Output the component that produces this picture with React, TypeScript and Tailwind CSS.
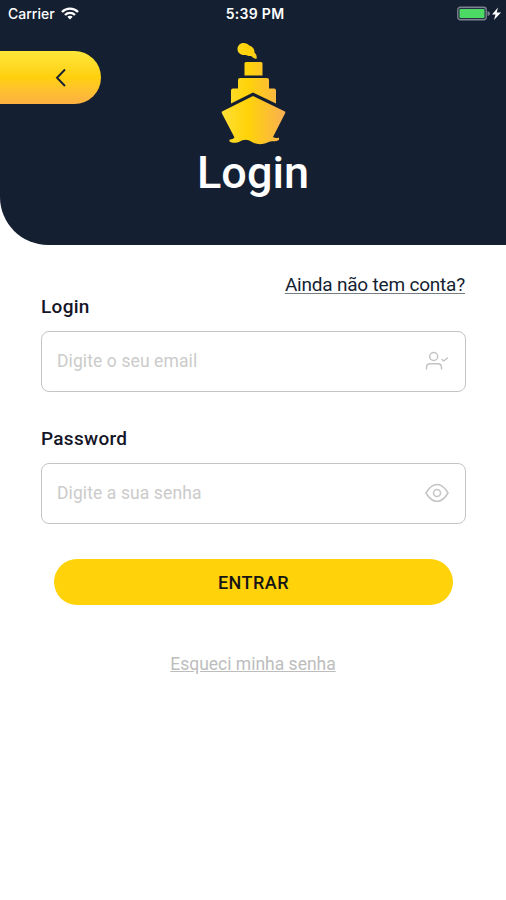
import React, { useState } from 'react';

const ShipLogo: React.FC = () => (
  <svg width="66" height="104" viewBox="0 0 66 104" fill="url(#ship)" aria-hidden="true">
    <defs>
      <linearGradient id="ship" gradientUnits="userSpaceOnUse" x1="0" y1="0" x2="66" y2="0">
        <stop offset="0" stopColor="#ffe03a" />
        <stop offset="0.42" stopColor="#ffd308" />
        <stop offset="1" stopColor="#f9ae55" />
      </linearGradient>
    </defs>
    <path d="M23.500 1C20 1 17.500 3.700 17.500 7C17.500 10.800 20.500 13.200 24.500 13C26 13 27 13.300 28 13.800C29.500 14.600 31 14.200 32 14.500C33 16 34.500 16.800 36.500 16.800C37.300 14 36 12 34.500 10.800C34.800 7 32.500 4.500 29.500 3.800C28 2 26 1 23.500 1Z" />
    <path d="M26 20H41Q42.500 20 42.500 21.500V33.500H24.500V21.500Q24.500 20 26 20Z" />
    <path d="M20 36H47Q49 36 49 38V46.500H54Q56 46.500 56 48.500V61.500L33 50.500L11 61.500V48.500Q11 46.500 13 46.500H18V38Q18 36 20 36Z" />
    <path d="M33 54L65 69.500Q65.500 70.500 65 71.500L53 95Q56 96.800 59 95.500V98C56 100 51 98.500 47.500 100.500C42 103 36 102.500 32 100C27 96.500 23 97.500 20 99.500C16 101.500 12 101 9.500 99.500V97.500Q12.500 98 14.500 95.500L2 71.500Q1.500 70.500 2 69.500Z" />
  </svg>
);

const WifiIcon: React.FC = () => (
  <svg width="18" height="13" viewBox="0 0 18 13" aria-hidden="true">
    <g fill="none" stroke="#fff" strokeWidth="2.4">
      <path d="M1 5C5.500 0.500 12.500 0.500 17 5" />
      <path d="M4 8C6.800 5.200 11.200 5.200 14 8" />
    </g>
    <path d="M9 12.500L6.300 9.700Q9 7.700 11.700 9.700Z" fill="#fff" />
  </svg>
);

const BatteryIcon: React.FC = () => (
  <svg width="45" height="16" viewBox="0 0 45 16" aria-hidden="true">
    <rect x="0.750" y="1.250" width="28.500" height="12.500" rx="2.500" fill="#253044" stroke="#7b828d" strokeWidth="1.300" />
    <rect x="2.500" y="3" width="25" height="9" rx="1" fill="#4cd964" />
    <path d="M30.500 5Q33 5.500 33 7.500Q33 9.500 30.500 10Z" fill="#7b828d" />
    <path d="M41 1.500L35 8.500H38.500L37 14L44 6.500H39.700Z" fill="#fff" />
  </svg>
);

const BackIcon: React.FC = () => (
  <svg width="12" height="20" viewBox="0 0 12 20" fill="none" stroke="#151f32" strokeWidth="1.900" aria-hidden="true">
    <path d="M10 1.500L2 9.750L10 18" />
  </svg>
);

const UserCheckIcon: React.FC = () => (
  <svg width="24" height="20" viewBox="0 0 24 20" fill="none" stroke="#c4c4c4" strokeWidth="1.500" strokeLinecap="round" strokeLinejoin="round" aria-hidden="true">
    <circle cx="8.700" cy="5.500" r="4" />
    <path d="M1.500 18V16.500Q1.500 12.800 5.200 12.800H12.800Q16.500 12.800 16.500 16.500V18" />
    <path d="M17 8.500L18.700 10L22.500 7" />
  </svg>
);

const EyeIcon: React.FC = () => (
  <svg width="24" height="20" viewBox="0 0 24 20" fill="none" stroke="#c4c4c4" strokeWidth="1.500" aria-hidden="true">
    <path d="M1 10C4.500 4 8 1.500 12 1.500S19.500 4 23 10C19.500 16 16 18.300 12 18.300S4.500 16 1 10Z" />
    <circle cx="12" cy="10" r="3.500" />
  </svg>
);

interface FieldProps {
  label: string;
  type: string;
  placeholder: string;
  value: string;
  onChange: (value: string) => void;
  icon: React.ReactNode;
}

const Field: React.FC<FieldProps> = ({ label, type, placeholder, value, onChange, icon }) => (
  <label className="block">
    <span className="block h-6 text-[19px] leading-6 font-medium tracking-[0.3px] text-[#151528]">{label}</span>
    <div className="mt-3 flex h-[61px] items-center rounded-lg border-[1.5px] border-[#c4c4c4] pr-4 pb-0.5 pl-[15px]">
      <input
        className="min-w-0 flex-1 bg-transparent pt-0.5 text-[17.5px] tracking-[0.1px] outline-none placeholder:text-[#cbcbcb]"
        type={type}
        placeholder={placeholder}
        value={value}
        onChange={(e) => onChange(e.target.value)}
      />
      {icon}
    </div>
  </label>
);

const App: React.FC = () => {
  const [email, setEmail] = useState('');
  const [password, setPassword] = useState('');

  return (
    <div className="min-h-screen bg-white font-['Roboto',sans-serif] text-[#151f32]">
      <header className="h-[245px] rounded-bl-[48px] bg-[#151f32] text-white">
        {/* Status bar */}
        <div className="grid h-[27px] grid-cols-3 items-center pr-1 pl-2 font-['Inter',sans-serif] text-[14px]">
          <div className="flex items-center gap-1.5">
            <span className="font-medium">Carrier</span>
            <WifiIcon />
          </div>
          <span className="text-center font-semibold tracking-[0.3px]">5:39 PM</span>
          <div className="flex justify-end">
            <BatteryIcon />
          </div>
        </div>

        <div className="grid grid-cols-[101px_1fr_101px] pt-[15px]">
          <button
            className="mt-[9px] flex h-[53px] items-center justify-end rounded-r-full bg-linear-to-b from-[#ffe638] via-[#ffd00a] to-[#fcb040] pr-[34px]"
            aria-label="Voltar"
          >
            <BackIcon />
          </button>
          <div className="flex flex-col items-center">
            <ShipLogo />
            <h1 className="text-[45px] leading-[54px] font-medium">Login</h1>
          </div>
        </div>
      </header>

      <main className="pt-7 pr-10 pl-[41px]">
        <div className="flex h-[22px] justify-end pr-px">
          <a href="#" className="text-[19px] leading-6 tracking-[-0.2px] underline decoration-[#777d88] underline-offset-2">
            Ainda não tem conta?
          </a>
        </div>
        <div className="flex flex-col gap-[35px]">
          <Field
            label="Login"
            type="email"
            placeholder="Digite o seu email"
            value={email}
            onChange={setEmail}
            icon={<UserCheckIcon />}
          />
          <Field
            label="Password"
            type="password"
            placeholder="Digite a sua senha"
            value={password}
            onChange={setPassword}
            icon={<EyeIcon />}
          />
        </div>

        <div className="mt-[35px] px-[13px]">
          <button className="h-[46px] w-full rounded-full bg-[#ffd20a] text-[18px] font-medium tracking-[0.5px] text-[#151515]">
            ENTRAR
          </button>
        </div>
        <div className="mt-[47px] pr-px text-center leading-6">
          <a href="#" className="text-[17.5px] text-[#bdbdbd] underline">
            Esqueci minha senha
          </a>
        </div>
      </main>
    </div>
  );
};

export default App;
